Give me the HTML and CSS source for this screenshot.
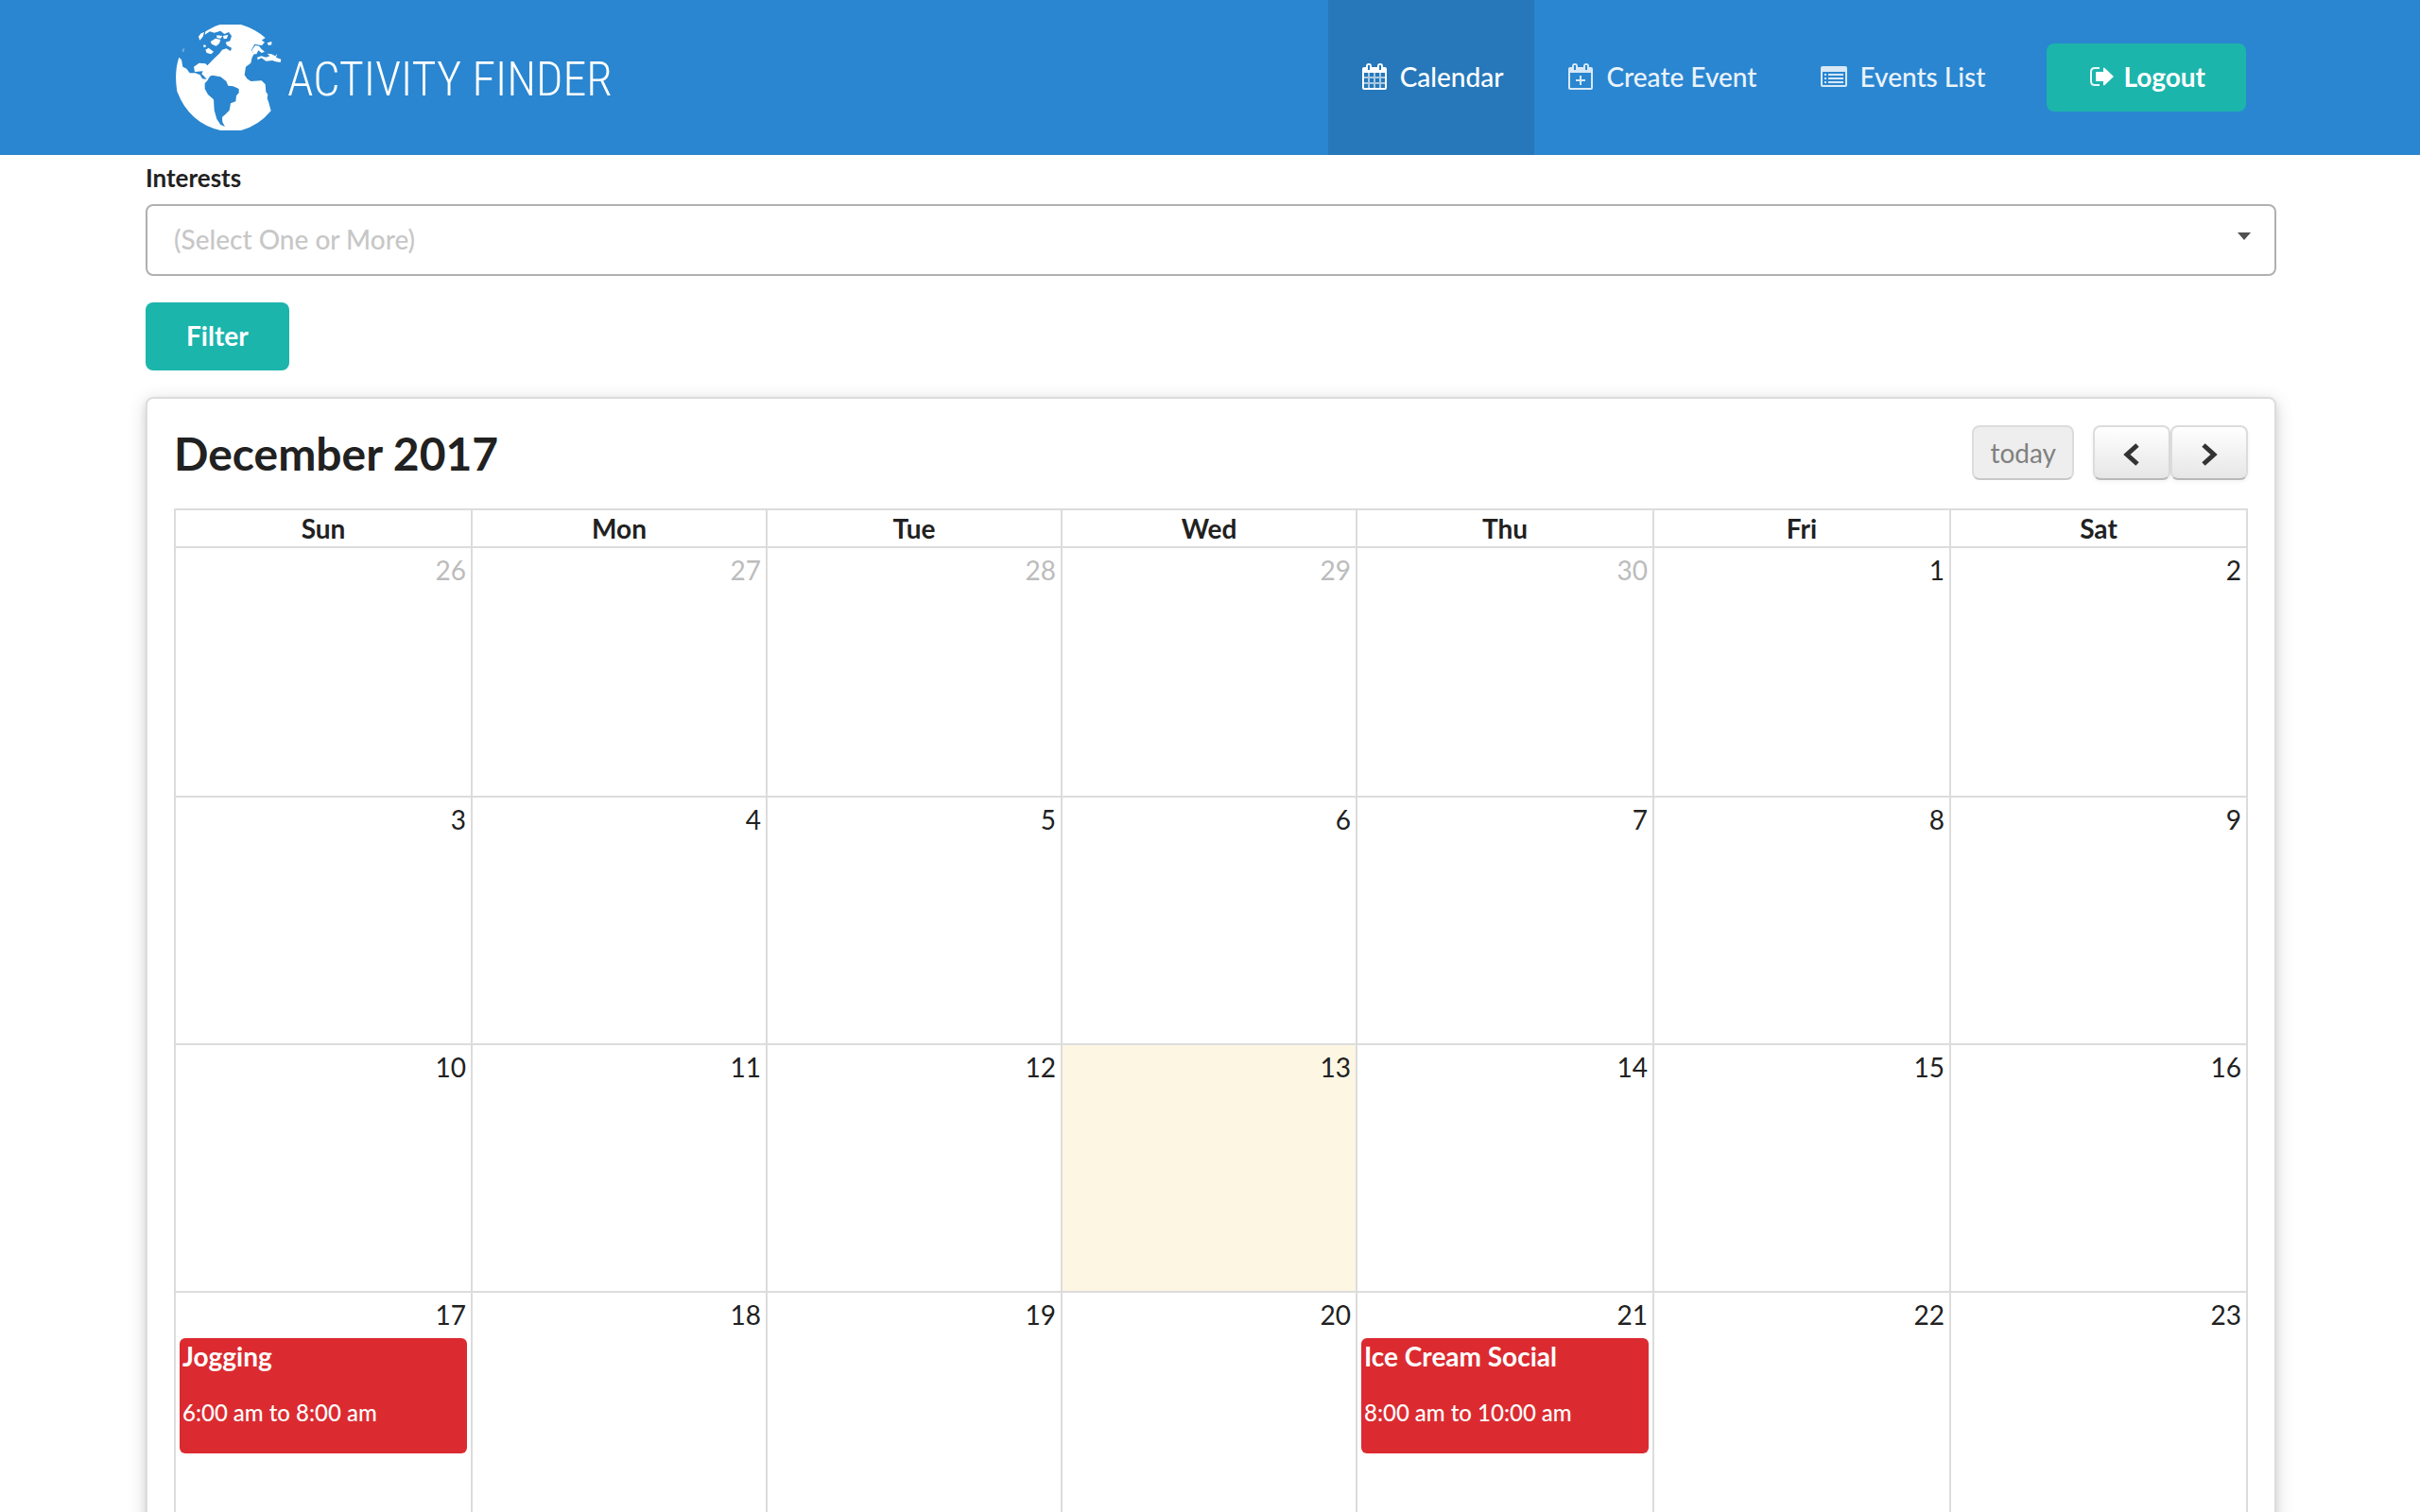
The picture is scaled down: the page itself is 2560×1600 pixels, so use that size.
FILE: index.html
```html
<!DOCTYPE html>
<html lang="en">
<head>
<meta charset="utf-8">
<title>Activity Finder</title>
<link rel="stylesheet" href="styles.css">
</head>
<body>
<header class="topbar">
  <a class="brand" href="#">
    <svg class="globe" viewBox="18 18 336 336" aria-hidden="true">
      <path fill="#fff" d="M112 40Q150 18 160 18H225Q270 32 302 60L290 68 284 78 296 80 290 84 268 80 258 98 266 112 260 122 256 140 240 152 236 178 244 190 256 198 290 196 302 208 304 232 310 240 308 252 313 266 320 292Q280 340 225 354H160Q60 330 22 230Q12 170 28 122L36 130 40 152 52 158 62 172 80 172 95 178 102 190 116 192 108 182 100 175 104 166 78 168 75 152 92 140 112 142 118 148 140 125 156 110 165 98 178 94 192 102 195 92 180 84 176 74 190 70 195 54 186 42 172 48 160 38 140 44 126 40 110 50Z"/>
      <path fill="#2a86d0" d="M110 205L118 196 126 182 134 179 160 184 178 198 184 212 200 214 218 222 218 235 210 244 208 262 192 268 188 290 176 302 165 312 166 328 174 342 160 336 148 318 140 290 138 256 120 240 110 222Z"/>
      <path fill="#fff" d="M128 72L144 62 160 66 156 78 146 86 132 80ZM148 52L166 54 160 62 148 60ZM168 54L184 50 180 62 170 64ZM90 56L98 46 108 42 104 56 94 68ZM112 98L122 92 138 104 130 112 116 108ZM106 82L114 84 112 90 106 90ZM270 84L282 86 290 96 300 104 290 108 280 100 274 112 264 112 260 98ZM276 122L290 118 304 122 316 118 308 110 322 112 334 118 340 110 336 122 352 128 350 138 336 136 324 132 304 134 290 124 278 130ZM308 76L322 72 322 82 312 84ZM272 70L288 66 300 74 290 84 276 80Z"/>
      <path fill="#fff" opacity=".3" d="M38 96L46 92 44 104 38 106Z"/>
    </svg>
    <span class="wordmark">ACTIVITY FINDER</span>
  </a>
  <nav class="menu">
    <a class="item active" href="#">
      <svg class="icon" viewBox="0 0 32 28" aria-hidden="true">
        <path fill="#fff" fill-rule="evenodd" d="M5 4H7V3Q7 0 10 0T13 3V4H19V3Q19 0 22 0T25 3V4H27Q29 4 29 6V26Q29 28 27 28H5Q3 28 3 26V6Q3 4 5 4ZM5 10V26H27V10ZM9 2V7H11V2ZM21 2V7H23V2Z"/>
        <path stroke="#fff" stroke-width="2" opacity=".6" d="M10 10V26M16 10V26M22 10V26M5 15H27M5 21H27"/>
      </svg>
      Calendar
    </a>
    <a class="item" href="#">
      <svg class="icon" viewBox="0 0 32 28" aria-hidden="true">
        <path fill="#d8e8f6" fill-rule="evenodd" d="M5 4H7V3Q7 0 10 0T13 3V4H19V3Q19 0 22 0T25 3V4H27Q29 4 29 6V26Q29 28 27 28H5Q3 28 3 26V6Q3 4 5 4ZM5 10V26H27V10ZM9 2V7H11V2ZM21 2V7H23V2ZM15 13H17V17H21V19H17V23H15V19H11V17H15Z"/>
      </svg>
      Create Event
    </a>
    <a class="item" href="#">
      <svg class="icon" viewBox="0 0 32 28" aria-hidden="true">
        <path fill="#d8e8f6" fill-rule="evenodd" d="M4 3H28Q30 3 30 5V23Q30 25 28 25H4Q2 25 2 23V5Q2 3 4 3ZM4 9V23H28V9Z"/>
        <path stroke="#d8e8f6" stroke-width="2" d="M6 12H8M10 12H26M6 16H8M10 16H26M6 20H8M10 20H26"/>
      </svg>
      Events List
    </a>
    <button class="button logout" type="button">
      <svg class="icon" viewBox="0 0 32 28" aria-hidden="true">
        <path fill="none" stroke="#fff" stroke-width="2" opacity=".9" d="M13 5H8Q4 5 4 9V19Q4 23 8 23H13"/>
        <path fill="#fff" d="M10 9H17V5.500Q17 4 18.500 5L28 14 18.500 23Q17 24 17 22.500V19H10Q9 19 9 18V10Q9 9 10 9Z"/>
      </svg>
      Logout
    </button>
  </nav>
</header>
<main class="page">
  <form class="filters">
    <label class="label" for="interests">Interests</label>
    <div class="dropdown">
      <select class="select" id="interests">
        <option>(Select One or More)</option>
      </select>
      <svg class="caret" viewBox="0 0 14 8" aria-hidden="true"><path fill="#505050" d="M0 0H14L7 8Z"/></svg>
    </div>
    <button class="button" type="button">Filter</button>
  </form>
  <section class="card">
    <div class="toolbar">
      <h2 class="title">December 2017</h2>
      <div class="controls">
        <button class="control today" type="button" disabled>today</button>
        <div class="pair">
          <button class="control arrow" type="button" aria-label="Previous month">
            <svg class="chevron" viewBox="0 0 18 24" aria-hidden="true"><path d="M15 2L4 12 15 22"/></svg>
          </button>
          <button class="control arrow" type="button" aria-label="Next month">
            <svg class="chevron" viewBox="0 0 18 24" aria-hidden="true"><path d="M3 2L14 12 3 22"/></svg>
          </button>
        </div>
      </div>
    </div>
    <table class="month">
      <colgroup>
        <col>
        <col class="midweek" span="3">
        <col span="3">
      </colgroup>
      <thead>
        <tr><th>Sun</th><th>Mon</th><th>Tue</th><th>Wed</th><th>Thu</th><th>Fri</th><th>Sat</th></tr>
      </thead>
      <tbody>
        <tr class="first"><td class="other">26</td><td class="other">27</td><td class="other">28</td><td class="other">29</td><td class="other">30</td><td>1</td><td>2</td></tr>
        <tr><td>3</td><td>4</td><td>5</td><td>6</td><td>7</td><td>8</td><td>9</td></tr>
        <tr><td>10</td><td>11</td><td>12</td><td class="current">13</td><td>14</td><td>15</td><td>16</td></tr>
        <tr>
          <td>17
            <a class="event" href="#"><strong class="name">Jogging</strong><span class="time">6:00 am to 8:00 am</span></a>
          </td>
          <td>18</td><td>19</td><td>20</td>
          <td>21
            <a class="event" href="#"><strong class="name">Ice Cream Social</strong><span class="time">8:00 am to 10:00 am</span></a>
          </td>
          <td>22</td><td>23</td>
        </tr>
      </tbody>
    </table>
  </section>
</main>
</body>
</html>
```
FILE: styles.css
```css
* { box-sizing: border-box; }

html { height: 100%; }

body {
  height: 100%;
  margin: 0;
  overflow: hidden;
  background: #fff;
  color: #212121;
  font: 28px/36px Lato, "Liberation Sans", sans-serif;
}

.topbar {
  display: flex;
  justify-content: space-between;
  height: 164px;
  padding: 0 184px 0 186px;
  background: #2a86d0;
}

.brand {
  display: flex;
  align-items: center;
  gap: 6px;
  color: #fff;
  text-decoration: none;
}

.globe { width: 112px; height: 112px; }

.wordmark {
  padding-top: 4px;
  font: 300 50px/60px "Roboto Condensed", Roboto, sans-serif;
  white-space: nowrap;
}

.menu { display: flex; align-items: center; }

.item {
  display: flex;
  align-items: center;
  gap: 11px;
  height: 100%;
  padding: 0 33px 2px;
  color: #eaf3fb;
  font-weight: 500;
  text-decoration: none;
  white-space: nowrap;
}

.item.active { background: #2678ba; color: #fff; }

.icon { width: 32px; height: 28px; }

.button {
  height: 72px;
  padding: 0 43px 2px;
  border: 0;
  border-radius: 8px;
  background: #1cb5ac;
  color: #fff;
  font: bold 28px/36px Lato, "Liberation Sans", sans-serif;
}

.logout {
  display: flex;
  align-items: center;
  gap: 6px;
  margin-left: 32px;
}

.page { padding: 6px 152px 0 154px; }

.filters { margin: 0 0 28px; }

.label {
  display: block;
  margin-bottom: 10px;
  font-size: 26px;
  font-weight: bold;
}

.dropdown { position: relative; margin-bottom: 28px; }

.select {
  display: block;
  width: 100%;
  height: 76px;
  padding: 0 28px 2px;
  border: 2px solid #b0b0b0;
  border-radius: 8px;
  appearance: none;
  background: #fff;
  color: #c7c7c7;
  font: inherit;
  font-weight: 500;
}

.caret {
  position: absolute;
  top: 30px;
  right: 27px;
  width: 14px;
  height: 8px;
}

.card {
  padding: 28px;
  border: 2px solid #dcdcdc;
  border-radius: 8px;
  box-shadow: 0 4px 8px rgba(34, 36, 38, .12), 0 4px 20px rgba(34, 36, 38, .15);
}

.toolbar {
  display: flex;
  justify-content: space-between;
  height: 58px;
  margin-bottom: 30px;
}

.title { margin: 0; font-size: 48px; line-height: 60px; }

.controls { display: flex; gap: 20px; }

.pair { display: flex; }

.control {
  display: flex;
  align-items: center;
  justify-content: center;
  height: 58px;
  padding: 0 17px;
  border: 2px solid #dcdcdc;
  border-bottom-color: #b8b8b8;
  border-radius: 8px;
  background: linear-gradient(#fff, #e6e6e6);
  box-shadow: 0 2px 4px rgba(0, 0, 0, .05);
  color: #333;
  font: 28px/36px Lato, "Liberation Sans", sans-serif;
}

.control.today {
  border-bottom-color: #c8c8c8;
  background: #eee;
  box-shadow: none;
  color: #808080;
}

.control.arrow { width: 82px; padding: 4px 0 0; }

.chevron { width: 18px; height: 24px; }

.chevron path {
  fill: none;
  stroke: #333;
  stroke-width: 5;
}

.month {
  width: 100%;
  border-collapse: collapse;
  table-layout: fixed;
}

.midweek { width: 312px; }

.month th,
.month td {
  border: 2px solid #dcdcdc;
}

.month th { height: 40px; padding: 0; line-height: 36px; }

.month td {
  height: 262px;
  padding: 5px 5px 4px 4px;
  text-align: right;
  vertical-align: top;
}

.month .first td { height: 264px; }

.month .other { color: #bcbcbc; }

.month .current { background: #fdf6e3; }

.event {
  display: flex;
  flex-direction: column;
  gap: 24px;
  height: 122px;
  margin-top: 7px;
  margin-right: -1px;
  padding: 1px 3px;
  border-radius: 6px;
  background: #db2b30;
  color: #fff;
  text-align: left;
  text-decoration: none;
}

.time { font-size: 24px; font-weight: 500; }
```
